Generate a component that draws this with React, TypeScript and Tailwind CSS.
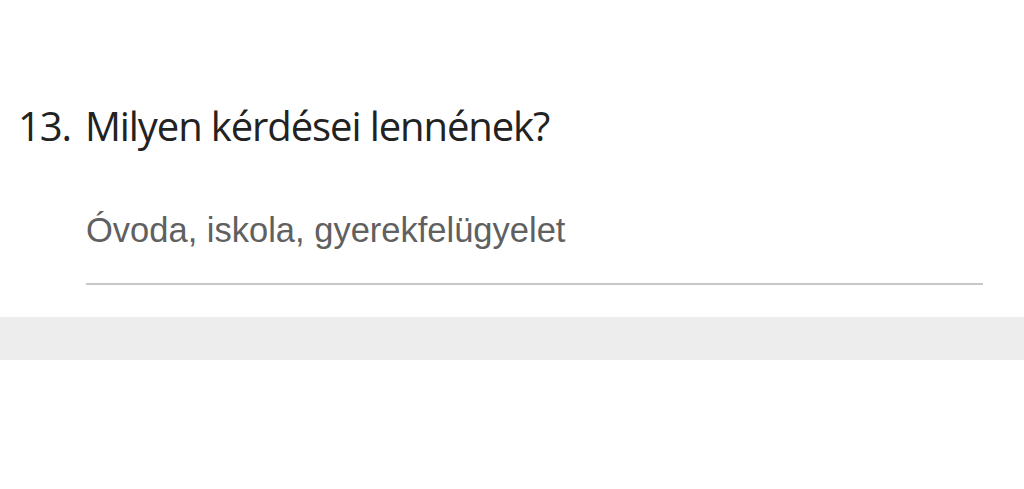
export default function App() {
  return (
    <div className="w-[1024px] h-[489px] bg-white overflow-hidden">
      <div className="pt-[98px] pl-[18px]">
        <h1 className="text-[40px] leading-[56px] text-[#222] font-['Open_Sans',sans-serif] tracking-[-1.1px]">
          13.<span className="ml-[14px]">Milyen kérdései lennének?</span>
        </h1>
      </div>
      <div className="pl-[86px] pr-[41px] pt-[56px]">
        <div className="text-[34.5px] leading-[40px] text-[#606060] font-['Liberation_Sans',Arial,sans-serif]">
          Óvoda, iskola, gyerekfelügyelet
        </div>
        <div className="mt-[33px] h-[2px] bg-[#c8c8c8]"></div>
      </div>
      <div className="mt-[32px] h-[43px] bg-[#ededed]"></div>
    </div>
  );
}
